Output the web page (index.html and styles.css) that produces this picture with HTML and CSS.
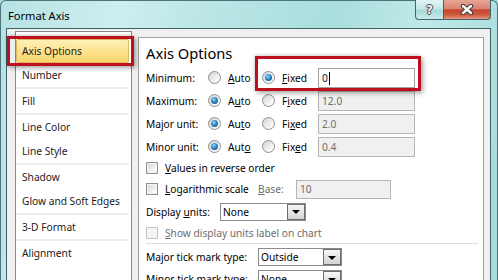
FILE: index.html
```html
<!DOCTYPE html>
<html lang="en">
<head>
  <meta charset="UTF-8">
  <meta name="viewport" content="width=device-width, initial-scale=1.0">
  <title>Format Axis</title>
  <link rel="stylesheet" href="styles.css">
</head>
<body>
  <div class="window">
    <div class="titlebar">
      <span class="title">Format Axis</span>
      <div class="caption-buttons">
        <div class="cap-btn help">?</div>
        <div class="cap-btn close">
          <svg width="14" height="11" viewBox="0 0 14 11">
            <path d="M3 2 L11 9 M11 2 L3 9" stroke="#3b3b3b" stroke-width="4.4" stroke-linecap="round"/>
            <path d="M3 2 L11 9 M11 2 L3 9" stroke="#ffffff" stroke-width="2.4" stroke-linecap="round"/>
          </svg>
        </div>
      </div>
    </div>

    <div class="client">
      <ul class="nav">
        <li class="nav-item selected">Axis Options</li>
        <li class="nav-item">Number</li>
        <li class="nav-sep"></li>
        <li class="nav-item">Fill</li>
        <li class="nav-sep"></li>
        <li class="nav-item">Line Color</li>
        <li class="nav-item">Line Style</li>
        <li class="nav-sep"></li>
        <li class="nav-item">Shadow</li>
        <li class="nav-item">Glow and Soft Edges</li>
        <li class="nav-sep"></li>
        <li class="nav-item">3-D Format</li>
        <li class="nav-sep"></li>
        <li class="nav-item">Alignment</li>
      </ul>

      <div class="panel">
        <h2 class="panel-title">Axis Options</h2>

        <div class="axis-row">
          <span class="row-label">Minimum:</span>
          <span class="opt"><span class="radio"></span><span><u>A</u>uto</span></span>
          <span class="opt"><span class="radio on"></span><span><u>F</u>ixed</span></span>
          <div class="field active">0<span class="caret"></span></div>
        </div>
        <div class="axis-row">
          <span class="row-label">Maximum:</span>
          <span class="opt"><span class="radio on"></span><span>A<u>u</u>to</span></span>
          <span class="opt"><span class="radio"></span><span>F<u>i</u>xed</span></span>
          <div class="field">12.0</div>
        </div>
        <div class="axis-row">
          <span class="row-label">Major unit:</span>
          <span class="opt"><span class="radio on"></span><span>Au<u>t</u>o</span></span>
          <span class="opt"><span class="radio"></span><span>Fi<u>x</u>ed</span></span>
          <div class="field">2.0</div>
        </div>
        <div class="axis-row">
          <span class="row-label">Minor unit:</span>
          <span class="opt"><span class="radio on"></span><span>Aut<u>o</u></span></span>
          <span class="opt"><span class="radio"></span><span>Fix<u>e</u>d</span></span>
          <div class="field">0.4</div>
        </div>

        <div class="check-row">
          <span class="checkbox"></span>
          <span><u>V</u>alues in reverse order</span>
        </div>
        <div class="check-row tall">
          <span class="checkbox"></span>
          <span class="check-label"><u>L</u>ogarithmic scale</span>
          <span class="base-label disabled"><u>B</u>ase:</span>
          <div class="field base">10</div>
        </div>

        <div class="select-row">
          <span class="units-label">Display <u>u</u>nits:</span>
          <div class="select units"><span class="select-text">None</span><span class="select-btn"></span></div>
        </div>
        <div class="check-row">
          <span class="checkbox off"></span>
          <span class="disabled"><u>S</u>how display units label on chart</span>
        </div>

        <div class="panel-sep"></div>

        <div class="tick-row">
          <span class="tick-label">Major tick mark type:</span>
          <div class="select tick"><span class="select-text">Outside</span><span class="select-btn"></span></div>
        </div>
        <div class="tick-row">
          <span class="tick-label">Minor tick mark type:</span>
          <div class="select tick"><span class="select-text">None</span><span class="select-btn"></span></div>
        </div>
      </div>
    </div>

    <div class="callout callout-nav"></div>
    <div class="callout callout-min"></div>
  </div>
</body>
</html>
```

FILE: styles.css
```css
* {
  box-sizing: border-box;
}

body {
  margin: 0;
  width: 498px;
  height: 280px;
  overflow: hidden;
  font-family: "Noto Sans", sans-serif;
  font-size: 10.2px;
  color: #000;
  background: #a9dcdc;
}

.window {
  position: relative;
  height: 280px;
  display: flex;
  flex-direction: column;
  border: 1px solid #4d7479;
  border-bottom: none;
  border-radius: 6px 6px 0 0;
  background: linear-gradient(100deg, #b6e2e3 0%, #cdeeee 22%, #b9e5e5 40%, #a9dedd 62%, #c0e9e9 78%, #a3dada 100%);
}

.titlebar {
  height: 27px;
  display: flex;
  flex: none;
}

.title {
  align-self: center;
  padding-left: 7px;
  padding-top: 1px;
  font-size: 11.1px;
  color: #000;
}

.caption-buttons {
  margin-left: auto;
  margin-right: 6px;
  margin-top: -1px;
  display: flex;
}

.cap-btn {
  height: 20px;
  border: 1px solid #46636a;
  border-top: none;
  display: flex;
  align-items: center;
  justify-content: center;
}

.help {
  width: 28px;
  border-right: none;
  border-radius: 0 0 0 4px;
  background: linear-gradient(#e2f4f4, #c3e6e7 48%, #a6d6d8 52%, #c8ecec);
  font-family: "DejaVu Sans", sans-serif;
  font-weight: bold;
  font-size: 12px;
  color: #eeeeee;
  text-shadow: 1px 0 0 #4c4c4c, -1px 0 0 #4c4c4c, 0 1px 0 #4c4c4c, 0 -1px 0 #4c4c4c;
}

.close {
  width: 48px;
  border-radius: 0 0 4px 0;
  background: linear-gradient(#e6a596, #d98472 45%, #c5452f 52%, #cf5a40 78%, #e59a80);
}

.client {
  flex: 1;
  margin: 0 6px 0 5px;
  border: 1px solid #3f6166;
  border-bottom: none;
  background: #f0f0f0;
  display: flex;
  align-items: flex-start;
  padding: 2px 0 0 8px;
  overflow: hidden;
}

.nav {
  width: 117px;
  height: 260px;
  flex: none;
  margin: 0;
  padding: 7px 2px 0 0;
  list-style: none;
  border: 1px solid #828790;
  background: #fff;
}

.nav-item {
  height: 24px;
  line-height: 24px;
  padding-left: 6px;
  color: #1b1b1b;
  white-space: nowrap;
}

.nav-item.selected {
  padding-left: 5px;
  line-height: 22px;
  border: 1px solid #dcb45c;
  border-radius: 2px;
  background: linear-gradient(#fef1b6, #fde28f 50%, #fbd56c);
}

.nav-sep {
  height: 2px;
  background: #ecedf4;
}

.panel {
  width: 346px;
  height: 260px;
  flex: none;
  margin: 6px 0 0 6px;
  padding-left: 7px;
  border: 1px solid #a0a0a0;
  background: #fff;
}

.panel-title {
  margin: 5px 0 3px;
  font-size: 14.7px;
  font-weight: normal;
  line-height: 20px;
}

.axis-row {
  height: 23px;
  display: flex;
  align-items: center;
}

.row-label {
  width: 62px;
}

.opt {
  width: 54px;
  display: flex;
  align-items: center;
}

.radio {
  position: relative;
  width: 13px;
  height: 13px;
  flex: none;
  margin-right: 7px;
  border: 1px solid #8d8f91;
  border-radius: 50%;
  background: linear-gradient(135deg, #d2d2d2, #f6f6f6 70%, #ffffff);
}

.radio.on::after {
  content: "";
  position: absolute;
  left: 2px;
  top: 2px;
  width: 7px;
  height: 7px;
  border-radius: 50%;
  background: radial-gradient(circle at 40% 35%, #8fdcff 0%, #2f86c4 45%, #13456f 100%);
}

.field {
  height: 20px;
  width: 97px;
  margin-left: 2px;
  padding-left: 3px;
  line-height: 18px;
  border: 1px solid #b5b5b5;
  background: #f0f0f0;
  color: #6d6d6d;
}

.field.active {
  border-color: #a3a3a3;
  background: #fff;
  color: #0d1a3a;
}

.caret {
  display: inline-block;
  width: 1px;
  height: 13px;
  margin-left: 1px;
  vertical-align: -3px;
  background: #000;
}

.check-row {
  height: 20px;
  display: flex;
  align-items: center;
}

.check-row.tall {
  height: 22px;
}

.checkbox {
  width: 12px;
  height: 12px;
  flex: none;
  margin-right: 7px;
  border: 1px solid #8e8f8f;
  background: linear-gradient(135deg, #d6d6d6, #f4f4f4 70%, #fff);
  box-shadow: inset 0 0 0 1px #f4f4f4;
}

.checkbox.off {
  border-color: #c6c6c6;
  background: #f4f4f4;
  box-shadow: none;
}

.check-label {
  width: 93px;
}

.base-label {
  width: 38px;
}

.field.base {
  width: 95px;
  height: 19px;
  margin-left: 0;
  line-height: 17px;
}

.disabled {
  color: #6d6d6d;
}

.select-row {
  height: 23px;
  display: flex;
  align-items: center;
}

.units-label {
  width: 74px;
}

.select {
  height: 18px;
  display: flex;
  border: 1px solid #8b8b8b;
  background: #fff;
}

.select.units {
  width: 86px;
}

.select-text {
  flex: 1;
  padding-left: 2px;
  line-height: 16px;
}

.select-btn {
  width: 18px;
  height: 16px;
  display: flex;
  align-items: center;
  justify-content: center;
  border: 1px solid #6e6e6e;
  background: linear-gradient(#f6f6f6, #e4e4e4 50%, #d4d4d4);
}

.select-btn::after {
  content: "";
  border-left: 4px solid transparent;
  border-right: 4px solid transparent;
  border-top: 4px solid #000;
  margin-top: 1px;
}

.panel-sep {
  height: 1px;
  margin-right: 5px;
  background: #dcdcdc;
}

.tick-row {
  height: 20px;
  margin-top: 3px;
  display: flex;
  align-items: center;
}

.tick-row + .tick-row {
  margin-top: 2px;
}

.tick-label {
  width: 112px;
}

.select.tick {
  width: 84px;
}

.callout {
  position: absolute;
  border: 3px solid #be0f1e;
  box-shadow: 2px 2px 5px rgba(0, 0, 0, 0.35), -1px -1px 3px rgba(0, 0, 0, 0.12);
}

.callout-nav {
  left: 6px;
  top: 35px;
  width: 127px;
  height: 30px;
}

.callout-min {
  left: 254px;
  top: 55px;
  width: 166px;
  height: 35px;
}
```
